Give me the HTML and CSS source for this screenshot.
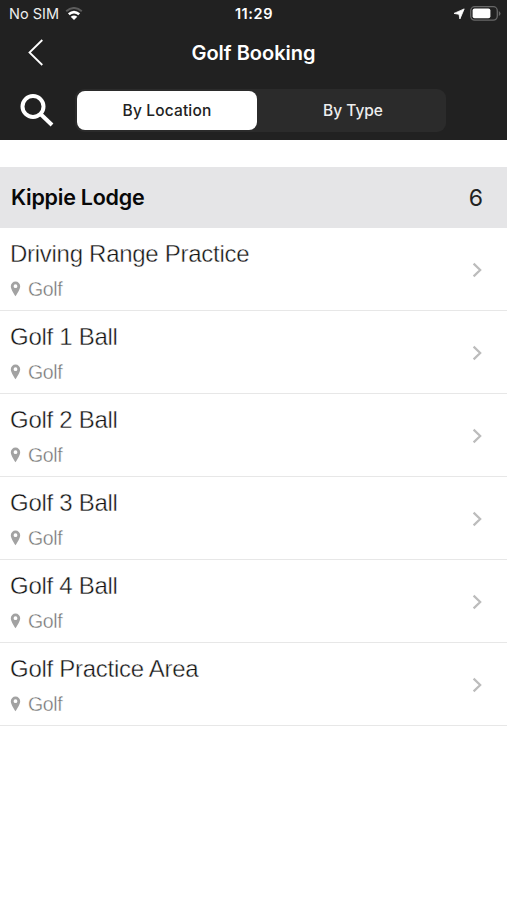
FILE: index.html
```html
<!DOCTYPE html>
<html lang="en">
<head>
<meta charset="utf-8">
<title>Golf Booking</title>
<link rel="stylesheet" href="styles.css">
</head>
<body>
<svg width="0" height="0" class="defs">
  <symbol id="pin" viewBox="0 0 10 16"><path fill-rule="evenodd" d="M5 .5A4.700 4.700 0 0 0 .3 5.200C.3 8.600 5 15.200 5 15.200S9.700 8.600 9.700 5.200A4.700 4.700 0 0 0 5 .5ZM5 3.300a1.900 1.900 0 1 1 0 3.800a1.900 1.900 0 0 1 0-3.800Z"/></symbol>
  <symbol id="chevron" viewBox="0 0 10 16"><path d="M1.600 1.600 8.200 8 1.600 14.400"/></symbol>
</svg>
<header class="top">
  <div class="status">
    <div class="carrier"><span>No SIM</span>
      <svg class="wifi" width="18" height="14" viewBox="0 0 18 14" fill="none"><path d="M1.200 4.200Q9-2.200 16.800 4.200" stroke="#5b5b5b" stroke-width="2"/><path d="M3.800 7.300Q9 2.900 14.200 7.300" stroke="#fff" stroke-width="2.600"/><path d="M9 13 5.700 9.700Q9 7.400 12.300 9.700Z" fill="#fff"/></svg>
    </div>
    <time class="clock">11:29</time>
    <div class="indicators">
      <svg width="12" height="12" viewBox="0 0 12 12"><path d="M11.200.9 6.900 11 6 6.300 1 5.400Z" fill="#fff" stroke="#fff" stroke-width=".8" stroke-linejoin="round"/></svg>
      <svg width="31" height="15" viewBox="0 0 31 15"><rect x=".7" y=".7" width="26.600" height="13.400" rx="4" fill="none" stroke="#686868" stroke-width="1.300"/><rect x="2.600" y="2.600" width="17.800" height="9.600" rx="2" fill="#fff"/><path d="M28.800 5v5q1.700-1 1.700-2.500T28.800 5Z" fill="#686868"/></svg>
    </div>
  </div>
  <div class="nav">
    <svg class="back" width="16" height="27" viewBox="0 0 16 27"><path d="M14.300 1 1.500 13.500 14.300 26"/></svg>
    <h1>Golf Booking</h1>
  </div>
  <div class="tools">
    <svg class="search" width="34" height="33" viewBox="0 0 34 33"><circle cx="13" cy="12.500" r="10.500"/><path d="m20.500 20 11.500 11"/></svg>
    <div class="segments"><button class="segment active">By Location</button><button class="segment">By Type</button></div>
  </div>
</header>
<main>
  <div class="group"><h2>Kippie Lodge</h2><span class="count">6</span></div>
  <ul class="list">
    <li><div><p class="name">Driving Range Practice</p><p class="place"><svg class="pin"><use href="#pin"/></svg><span>Golf</span></p></div><svg class="chevron"><use href="#chevron"/></svg></li>
    <li><div><p class="name">Golf 1 Ball</p><p class="place"><svg class="pin"><use href="#pin"/></svg><span>Golf</span></p></div><svg class="chevron"><use href="#chevron"/></svg></li>
    <li><div><p class="name">Golf 2 Ball</p><p class="place"><svg class="pin"><use href="#pin"/></svg><span>Golf</span></p></div><svg class="chevron"><use href="#chevron"/></svg></li>
    <li><div><p class="name">Golf 3 Ball</p><p class="place"><svg class="pin"><use href="#pin"/></svg><span>Golf</span></p></div><svg class="chevron"><use href="#chevron"/></svg></li>
    <li><div><p class="name">Golf 4 Ball</p><p class="place"><svg class="pin"><use href="#pin"/></svg><span>Golf</span></p></div><svg class="chevron"><use href="#chevron"/></svg></li>
    <li><div><p class="name">Golf Practice Area</p><p class="place"><svg class="pin"><use href="#pin"/></svg><span>Golf</span></p></div><svg class="chevron"><use href="#chevron"/></svg></li>
  </ul>
</main>
</body>
</html>
```
FILE: styles.css
```css
* { box-sizing: border-box; }
body { margin: 0; min-height: 900px; background: #fff; font-family: Inter, "Liberation Sans", sans-serif; }
h1, h2, p, ul { margin: 0; padding: 0; }
svg { display: block; flex: none; }
.defs { position: absolute; }
.top { height: 140px; background: #212121; color: #fff; }
.status { height: 27px; padding: 0 6px 0 9px; display: grid; grid-template-columns: 1fr auto 1fr; align-items: center; }
.carrier { display: flex; align-items: center; gap: 6px; color: #eee; font-size: 14.500px; }
.clock { margin-right: 2px; font-weight: 600; font-size: 14.500px; letter-spacing: .6px; }
.indicators { display: flex; justify-content: flex-end; align-items: center; gap: 5px; }
.nav { height: 50px; display: grid; grid-template-columns: 60px 1fr 60px; align-items: center; }
.back { margin-left: 28px; fill: none; stroke: #fff; stroke-width: 1.800; }
h1 { padding-top: 1px; text-align: center; font-size: 20px; line-height: 28px; font-weight: 600; letter-spacing: 0; }
.tools { display: flex; align-items: center; height: 66px; padding-left: 20px; }
.search { fill: none; stroke: #fff; stroke-width: 4; }
.segments { margin-left: 21px; width: 371px; height: 43px; padding: 2px; display: flex; background: #2b2b2b; border-radius: 9px; }
.segment { flex: 1; border: 0; padding: 0 0 0 5px; border-radius: 8px; background: transparent; color: #eee; font: 500 15.500px Inter, sans-serif; }
.segment.active { flex: 0 0 180px; padding: 0; background: #fff; color: #222; letter-spacing: .15px; }
.group { margin-top: 27px; height: 61px; padding: 0 24px 0 11px; display: flex; align-items: center; justify-content: space-between; background: #e5e5e7; }
h2 { font-size: 21.500px; font-weight: 600; letter-spacing: -.25px; color: #080808; padding-bottom: 2px; }
.count { font-size: 23px; color: #222; }
.list { list-style: none; }
.list li { height: 83px; padding: 0 25px 0 10px; display: flex; justify-content: space-between; align-items: center; background: linear-gradient(#e7e7e7, #e7e7e7) 0 82px / 100% 1px no-repeat; }
.name, .place { font-family: "Liberation Sans", sans-serif; -webkit-text-stroke: .4px #fff; }
.name { padding-top: 1px; font-size: 24px; line-height: 32px; letter-spacing: -.28px; color: #151515; }
.place { margin-top: 5px; display: flex; align-items: center; gap: 7px; font-size: 19.500px; line-height: 28px; letter-spacing: -.4px; color: #707070; }
.pin { width: 11px; height: 16px; fill: #a2a2a2; }
.chevron { width: 10px; height: 16px; fill: none; stroke: #bcbcbc; stroke-width: 2.200; }
```
